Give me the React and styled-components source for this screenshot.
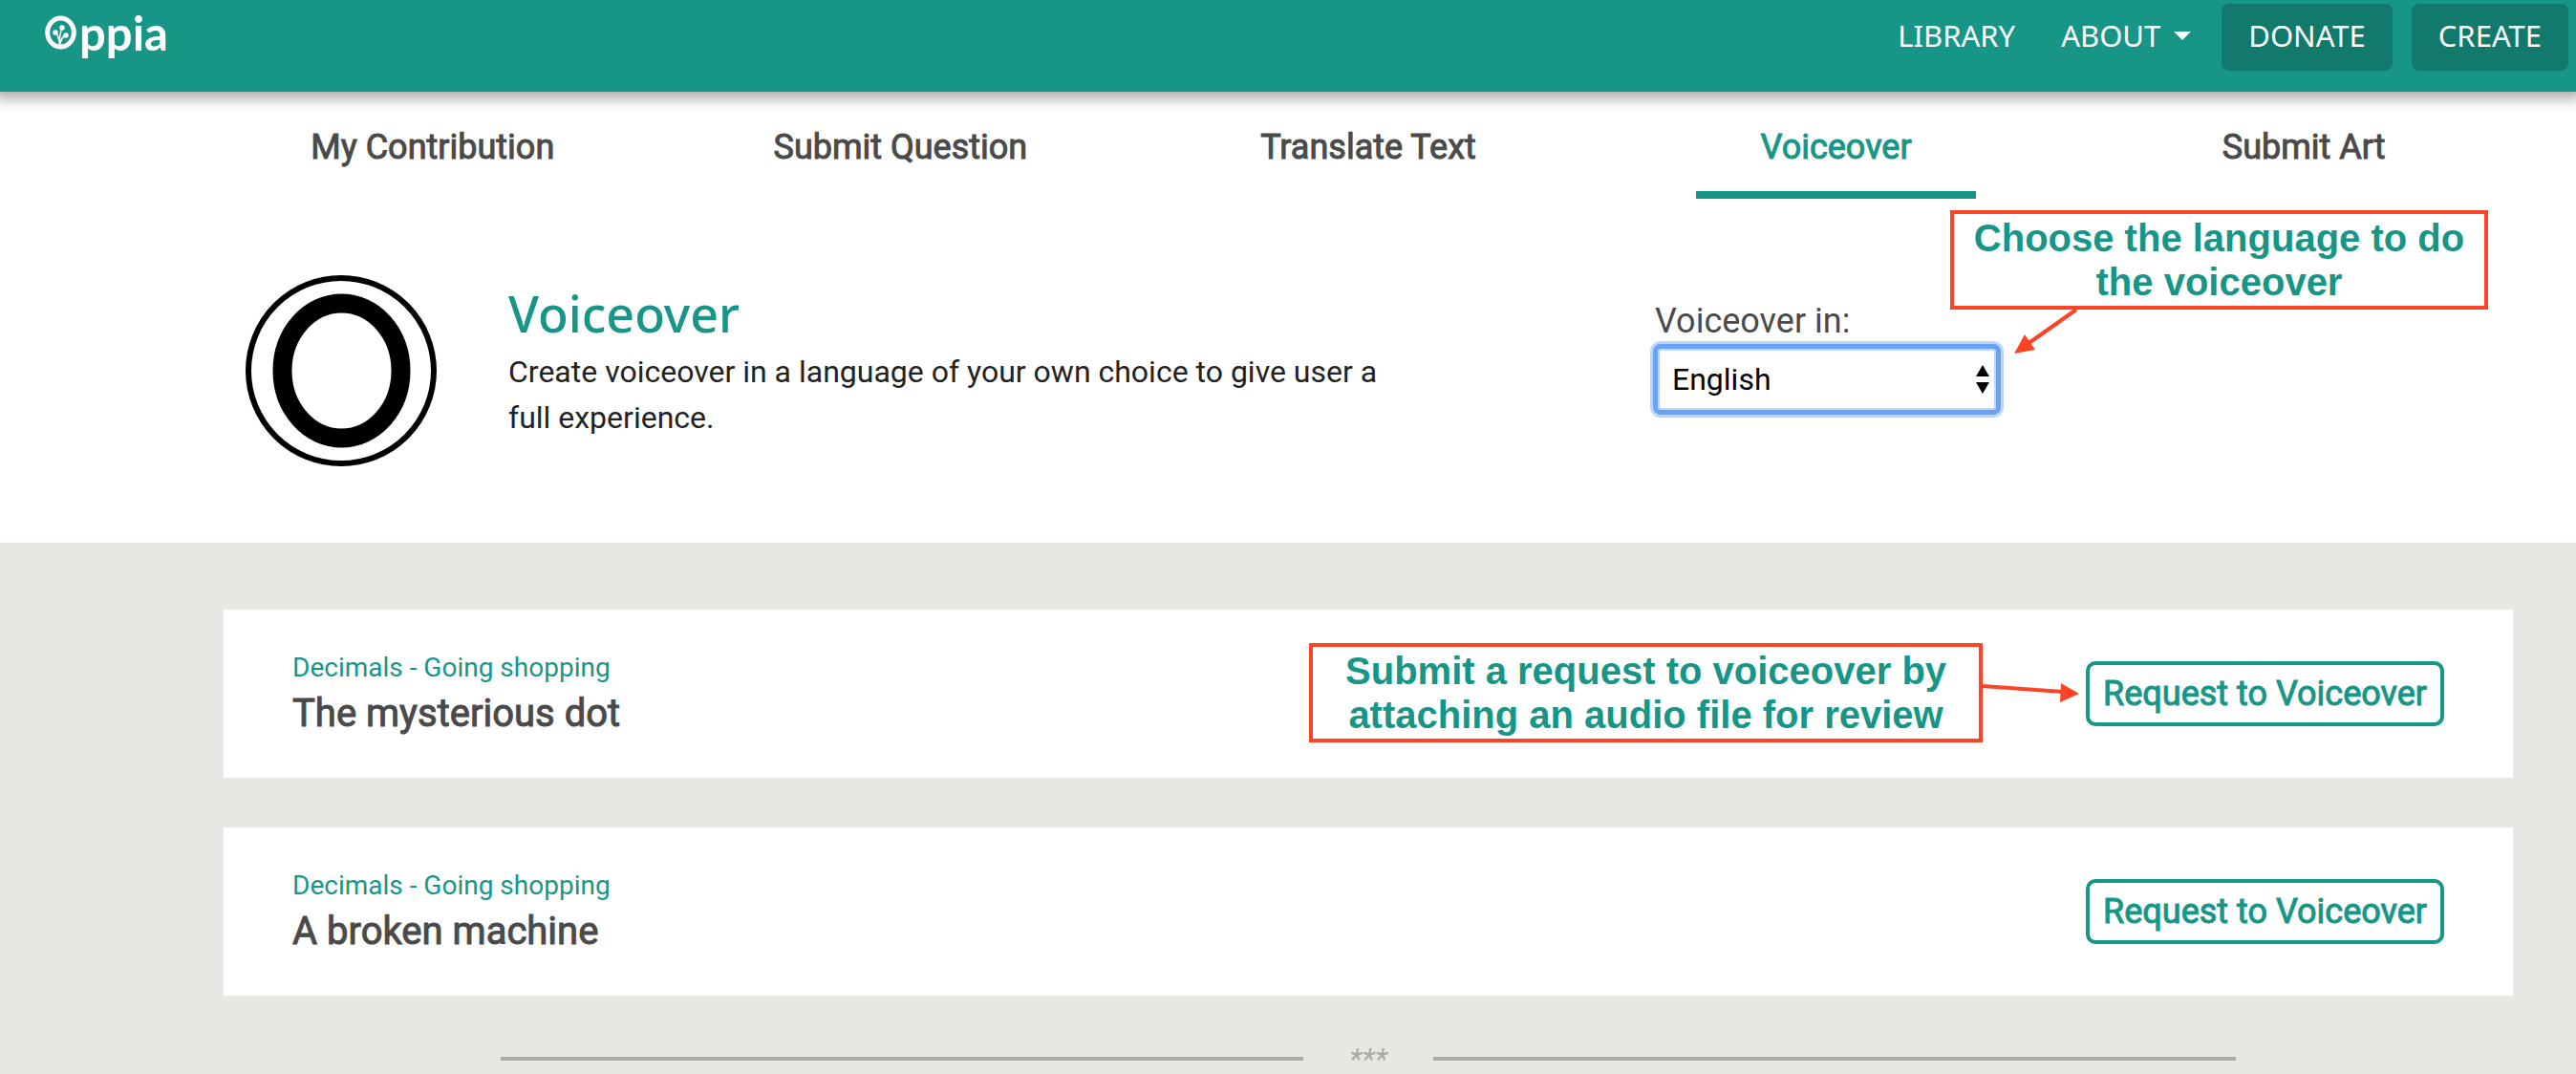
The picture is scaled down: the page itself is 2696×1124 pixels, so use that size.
import React from "react";
import styled, { createGlobalStyle, css } from "styled-components";

const teal = "#179688";
const grey = "#4a4a4a";
const red = "#ff4426";
const display = `"Noto Sans", "Open Sans", sans-serif`;

const GlobalStyle = createGlobalStyle`
  *, *::before, *::after { box-sizing: border-box; }
  body { margin: 0; background: #fff; font-family: Roboto, "Liberation Sans", sans-serif; }
  button, select { font-family: inherit; }
  h1, h2, p { margin: 0; font-weight: 400; }
`;

const heavy = css`
  font-weight: 400;
  -webkit-text-stroke: 1px currentColor;
`;

const Page = styled.div`
  display: flex;
  flex-direction: column;
  min-height: 100vh;
`;

const Header = styled.header`
  position: relative;
  z-index: 1;
  display: flex;
  justify-content: space-between;
  align-items: flex-start;
  height: 96px;
  padding: 4px 8px 0 47px;
  background: ${teal};
  box-shadow: 0 0 14px 7px rgba(0, 0, 0, 0.34);
`;

const Logo = styled.a`
  display: flex;
  gap: 2px;
  color: #fff;
  text-decoration: none;
  font: 700 49px/60px Lato, sans-serif;

  svg {
    width: 34px;
    height: 36px;
    margin-top: 12px;
  }
`;

const Nav = styled.nav`
  display: flex;
  align-items: flex-start;
  gap: 20px;
  font: 400 31px/66px ${display};
`;

const NavLink = styled.a`
  display: flex;
  align-items: center;
  gap: 14px;
  margin-right: ${(p) => (p.$menu ? 12 : 28)}px;
  color: #fff;
  text-decoration: none;
`;

const Caret = styled.span`
  border: 9px solid transparent;
  border-top-color: #fff;
  border-bottom: 0;
`;

const NavButton = styled.button`
  height: 70px;
  padding: 0 28px 4px;
  border: 0;
  border-radius: 8px;
  background: #12796d;
  color: #fff;
  font: inherit;
`;

const Tabs = styled.nav`
  display: grid;
  grid-template-columns: repeat(5, 1fr);
  padding: 0 40px 0 208px;
`;

const Tab = styled.button`
  padding: 34px 0 0;
  border: 0;
  background: none;
  color: ${(p) => (p.$active ? teal : grey)};
  font-size: 36px;
  line-height: 48px;
  ${heavy}

  &::after {
    content: "";
    display: block;
    width: 60%;
    height: 8px;
    margin: 22px auto 0;
    background: ${(p) => (p.$active ? teal : "transparent")};
  }
`;

const Hero = styled.section`
  display: grid;
  grid-template-columns: 200px minmax(0, 1fr) 364px;
  column-gap: 75px;
  margin: 0 40px 0 208px;
  padding: 80px 562px 80px 49px;
`;

const HeroIcon = styled.svg`
  width: 200px;
  height: 200px;
`;

const HeroText = styled.div`
  max-width: 930px;
  padding-top: 16px;
`;

const HeroTitle = styled.h1`
  margin-bottom: 13px;
  color: ${teal};
  font: 500 52px/48px ${display};
`;

const HeroCopy = styled.p`
  color: #222;
  font-size: 32px;
  line-height: 48px;
`;

const Picker = styled.div`
  position: relative;
  padding-top: 24px;
`;

const PickerLabel = styled.label`
  display: block;
  padding-left: 2px;
  color: ${grey};
  font-size: 36px;
  line-height: 48px;
`;

const SelectBox = styled.div`
  display: grid;
  align-items: center;

  > * { grid-area: 1 / 1; }

  svg {
    justify-self: end;
    width: 14px;
    height: 30px;
    margin-right: 12px;
    pointer-events: none;
  }
`;

const Select = styled.select`
  appearance: none;
  width: 100%;
  height: 74px;
  padding: 0 36px 0 15px;
  border: 5px solid #68a1f5;
  border-radius: 8px;
  outline: none;
  background: #fff;
  box-shadow: 0 0 0 3px #bcd6fb, inset 0 0 0 2px #bcd6fb;
  color: #000;
  font-size: 32px;
`;

const Callout = styled.p`
  width: ${(p) => p.$width}px;
  padding: 2px 12px;
  border: 4px solid ${red};
  background: #fff;
  color: ${teal};
  font: 700 40px/46px "Liberation Sans", Arial, sans-serif;
  text-align: center;
`;

const LanguageNote = styled.div`
  position: absolute;
  top: -68px;
  left: 311px;
`;

const RequestNote = styled.div`
  position: absolute;
  top: -6px;
  right: 100%;
  display: flex;
  align-items: flex-start;
  margin-right: 7px;
`;

const Arrow = styled.svg`
  display: block;
  flex: none;
  overflow: visible;
`;

const LanguageArrow = styled(Arrow)`
  margin-left: 67px;
`;

const RequestArrow = styled(Arrow)`
  margin-top: 42px;
`;

const List = styled.main`
  flex: 1;
  padding: 70px 66px 0 234px;
  background: #e8e7e3;
`;

const Card = styled.article`
  display: flex;
  justify-content: space-between;
  align-items: flex-start;
  margin-bottom: 52px;
  padding: 41px 72px 39px;
  background: #fff;
`;

const Topic = styled.p`
  color: ${teal};
  font-size: 28px;
  line-height: 40px;
`;

const CardTitle = styled.h2`
  color: ${grey};
  font-size: 40px;
  line-height: 56px;
  ${heavy}
`;

const Action = styled.div`
  position: relative;
  padding-top: 13px;
`;

const RequestButton = styled.button`
  height: 68px;
  padding: 0 14px;
  border: 4px solid ${teal};
  border-radius: 10px;
  background: #fff;
  color: ${teal};
  font-size: 36px;
  white-space: nowrap;
  ${heavy}
`;

const Divider = styled.div`
  display: flex;
  align-items: center;
  width: 1816px;
  max-width: 100%;
  height: 28px;
  margin: 0 auto;
  color: #aaa;
  font-size: 32px;
  font-style: italic;
  line-height: 28px;
  text-align: center;

  &::before, &::after {
    content: "";
    flex: 1;
    height: 4px;
    background: #aaa;
  }
`;

const Stars = styled.span`
  width: 136px;
`;

const tabs = ["My Contribution", "Submit Question", "Translate Text", "Voiceover", "Submit Art"];

const lessons = [
  { topic: "Decimals - Going shopping", title: "The mysterious dot", note: true },
  { topic: "Decimals - Going shopping", title: "A broken machine" },
];

export default function App() {
  return (
    <Page>
      <GlobalStyle />
      <Header>
        <Logo href="#" aria-label="Oppia">
          <svg viewBox="0 0 34 36" fill="none" stroke="#fff" aria-hidden="true">
            <ellipse cx="16.5" cy="18" rx="13.8" ry="15" strokeWidth="5" />
            <path d="M15.5 31 C15 25 14 21 11 18 M15.5 31 C15 24 16 18 18 13 M15.5 31 C17 26 18 22 22 20.500" strokeWidth="1.500" />
            <g fill="#fff" stroke="none">
              <circle cx="11" cy="18" r="2.700" />
              <circle cx="18" cy="13" r="2.700" />
              <circle cx="22" cy="21" r="2.700" />
            </g>
          </svg>
          ppia
        </Logo>
        <Nav>
          <NavLink href="#library">LIBRARY</NavLink>
          <NavLink href="#about" $menu>ABOUT <Caret /></NavLink>
          <NavButton>DONATE</NavButton>
          <NavButton>CREATE</NavButton>
        </Nav>
      </Header>

      <Tabs>
        {tabs.map((name) => (
          <Tab key={name} $active={name === "Voiceover"}>{name}</Tab>
        ))}
      </Tabs>

      <Hero>
        <HeroIcon viewBox="0 0 200 200" fill="none" stroke="#000" aria-hidden="true">
          <circle cx="100" cy="100" r="97" strokeWidth="6" />
          <ellipse cx="100.500" cy="100" rx="62" ry="70.500" strokeWidth="20" />
        </HeroIcon>
        <HeroText>
          <HeroTitle>Voiceover</HeroTitle>
          <HeroCopy>
            Create voiceover in a language of your own choice to give user a full experience.
          </HeroCopy>
        </HeroText>
        <Picker>
          <PickerLabel htmlFor="language">Voiceover in:</PickerLabel>
          <SelectBox>
            <Select id="language" defaultValue="English">
              <option>English</option>
            </Select>
            <svg viewBox="0 0 14 30" aria-hidden="true">
              <path d="M7 0 L14 12 H0 Z M0 18 H14 L7 30 Z" />
            </svg>
          </SelectBox>
          <LanguageNote>
            <Callout $width={563}>Choose the language to do the voiceover</Callout>
            <LanguageArrow width="66" height="46" viewBox="0 0 66 46" fill={red}>
              <path d="M65 0 L14 36" stroke={red} strokeWidth="4" />
              <path d="M0 46 L11 26 L22 42 Z" />
            </LanguageArrow>
          </LanguageNote>
        </Picker>
      </Hero>

      <List>
        {lessons.map((lesson) => (
          <Card key={lesson.title}>
            <div>
              <Topic>{lesson.topic}</Topic>
              <CardTitle>{lesson.title}</CardTitle>
            </div>
            <Action>
              <RequestButton>Request to Voiceover</RequestButton>
              {lesson.note && (
                <RequestNote>
                  <Callout $width={705}>
                    Submit a request to voiceover by attaching an audio file for review
                  </Callout>
                  <RequestArrow width="101" height="20" viewBox="0 0 101 20" fill={red}>
                    <path d="M0 3 L84 9" stroke={red} strokeWidth="4" />
                    <path d="M82 0 L101 11 L81 20 Z" />
                  </RequestArrow>
                </RequestNote>
              )}
            </Action>
          </Card>
        ))}
        <Divider>
          <Stars>***</Stars>
        </Divider>
      </List>
    </Page>
  );
}
